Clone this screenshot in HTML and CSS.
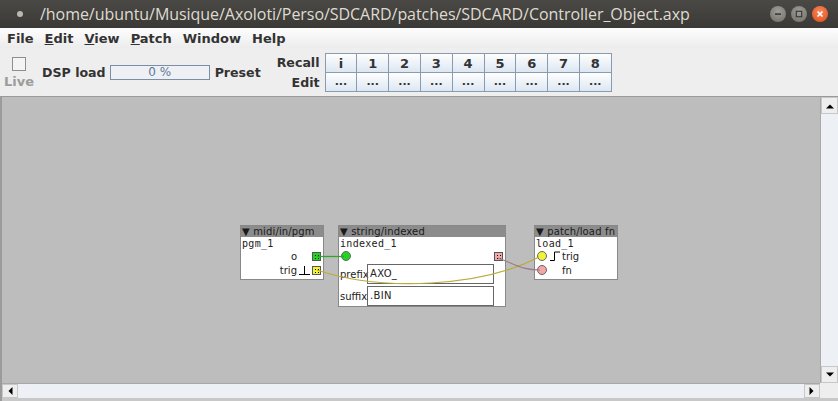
FILE: index.html
```
<!DOCTYPE html>
<html>
<head>
<meta charset="utf-8">
<link rel="stylesheet" href="styles.css">
</head>
<body>
<div class="window">
  <div class="titlebar">
    <span class="tb-dot"></span>
    <span class="tb-title">/home/ubuntu/Musique/Axoloti/Perso/SDCARD/patches/SDCARD/Controller_Object.axp</span>
    <span class="tb-buttons">
      <span class="wb wb-min"><svg width="14" height="14" viewBox="0 0 14 14"><rect x="4" y="6.3" width="6" height="1.6" fill="#3c3b37"/></svg></span>
      <span class="wb wb-max"><svg width="14" height="14" viewBox="0 0 14 14"><rect x="4.3" y="4.3" width="5.4" height="5.4" fill="none" stroke="#3c3b37" stroke-width="1.2"/></svg></span>
      <span class="wb wb-close"><svg width="14" height="14" viewBox="0 0 14 14"><path d="M4.5 4.5L9.5 9.5M9.5 4.5L4.5 9.5" stroke="#fff" stroke-width="1.6"/></svg></span>
    </span>
  </div>
  <div class="menubar">
    <span class="mi">File</span>
    <span class="mi"><u>E</u>dit</span>
    <span class="mi"><u>V</u>iew</span>
    <span class="mi"><u>P</u>atch</span>
    <span class="mi">Window</span>
    <span class="mi">Help</span>
  </div>
  <div class="toolbar">
    <div class="live">
      <span class="chk"></span>
      <span class="live-lbl">Live</span>
    </div>
    <span class="tlbl dsp">DSP load</span>
    <div class="progress">0 %</div>
    <span class="tlbl preset">Preset</span>
    <div class="preset-labels">
      <span class="tlbl">Recall</span>
      <span class="tlbl">Edit</span>
    </div>
    <div class="pgrid">
      <span class="pb">i</span><span class="pb">1</span><span class="pb">2</span><span class="pb">3</span><span class="pb">4</span><span class="pb">5</span><span class="pb">6</span><span class="pb">7</span><span class="pb">8</span>
      <span class="pb dots">...</span><span class="pb dots">...</span><span class="pb dots">...</span><span class="pb dots">...</span><span class="pb dots">...</span><span class="pb dots">...</span><span class="pb dots">...</span><span class="pb dots">...</span><span class="pb dots">...</span>
    </div>
  </div>
  <div class="workarea">
    <div class="row-main">
      <div class="canvas">
        <div class="node n1">
          <div class="nh">▼ midi/in/pgm</div>
          <div class="nname">pgm_1</div>
          <div class="port out"><span class="plbl">o</span><span class="slot"></span><span class="sq green"></span></div>
          <div class="port out"><span class="plbl">trig</span><span class="slot"><svg width="12" height="10" viewBox="0 0 12 10"><path d="M0 9.5H11M5.5 9.5V1" stroke="#000" stroke-width="1" fill="none"/></svg></span><span class="sq yellow"></span></div>
        </div>
        <div class="node n2">
          <div class="nh">▼ string/indexed</div>
          <div class="nname">indexed_1</div>
          <div class="n2ports"><span class="circ green"></span><span class="sq pink"></span></div>
          <div class="field"><span class="flbl">prefix</span><span class="fbox">AXO_</span></div>
          <div class="field"><span class="flbl">suffix</span><span class="fbox">.BIN</span></div>
        </div>
        <div class="node n3">
          <div class="nh">▼ patch/load fn</div>
          <div class="nname">load_1</div>
          <div class="port in"><span class="circ yellow"></span><span class="slot"><svg width="12" height="10" viewBox="0 0 12 10"><path d="M1 9.5H5.5V1H11" stroke="#000" stroke-width="1" fill="none"/></svg></span><span class="plbl">trig</span></div>
          <div class="port in"><span class="circ pink"></span><span class="slot"></span><span class="plbl">fn</span></div>
        </div>
        <svg class="wires" width="817" height="287" viewBox="0 0 817 287">
          <path d="M315 159.5 L342 159.5" stroke="#2ea62e" stroke-width="1.3" fill="none"/>
          <path d="M315 173 C 380 195, 480 190, 537 160" stroke="#b8ad3c" stroke-width="1.2" fill="none"/>
          <path d="M496 161 C 515 168, 520 173, 538 173" stroke="#a07a86" stroke-width="1.2" fill="none"/>
        </svg>
      </div>
      <div class="vscroll">
        <span class="sbtn"><svg width="10" height="6" viewBox="0 0 10 6"><path d="M1 5.5L5 1.5L9 5.5Z" fill="#000"/></svg></span>
        <span class="strack"></span>
        <span class="sbtn"><svg width="10" height="6" viewBox="0 0 10 6"><path d="M1 0.5L5 4.5L9 0.5Z" fill="#000"/></svg></span>
      </div>
    </div>
    <div class="row-h">
      <div class="hscroll">
        <span class="sbtn h"><svg width="6" height="10" viewBox="0 0 6 10"><path d="M5.5 1L1.5 5L5.5 9Z" fill="#000"/></svg></span>
        <span class="strack"></span>
        <span class="sbtn h"><svg width="6" height="10" viewBox="0 0 6 10"><path d="M0.5 1L4.5 5L0.5 9Z" fill="#000"/></svg></span>
      </div>
      <div class="corner"></div>
    </div>
  </div>
</div>
</body>
</html>
```
FILE: styles.css
```
html, body { margin: 0; padding: 0; }
body { width: 838px; height: 401px; overflow: hidden; background: #3c3b37; font-family: "DejaVu Sans", sans-serif; }
.window { width: 838px; height: 401px; display: flex; flex-direction: column; }

.titlebar { height: 28px; flex: none; display: flex; align-items: center; background: linear-gradient(#4a4945, #3a3935); color: #dfdbd2; }
.tb-dot { width: 6px; height: 6px; border-radius: 50%; background: #bbb8b0; margin-left: 17px; margin-right: 17px; }
.tb-title { font-family: "Open Sans", sans-serif; font-size: 16px; letter-spacing: -0.05px; white-space: nowrap; }
.tb-buttons { margin-left: auto; margin-right: 10px; display: flex; gap: 5px; }
.wb { width: 16px; height: 16px; border-radius: 50%; display: flex; align-items: center; justify-content: center; }
.wb svg { width: 14px; height: 14px; }
.wb-min, .wb-max { background: radial-gradient(circle at 50% 35%, #a09e98, #6f6d68); }
.wb-close { background: radial-gradient(circle at 50% 35%, #f7895c, #df4a16); }

.menubar { height: 20px; flex: none; display: flex; align-items: center; background: linear-gradient(#fdfdfd, #ececec); font-weight: bold; font-size: 13px; color: #333; padding-left: 7px; gap: 11px; }
.mi u { text-decoration: underline; }

.toolbar { height: 49px; flex: none; display: flex; align-items: center; background: #eeeeee; border-bottom: 1px solid #9a9a9a; padding-left: 12px; box-sizing: border-box; font-size: 12.6px; font-weight: bold; color: #333; }
.live { display: flex; flex-direction: column; align-items: center; width: 14px; margin-top: 2px; }
.chk { width: 12px; height: 12px; border: 1px solid #8e8f8f; background: #f4f4f4; }
.live-lbl { color: #9c9c9c; margin-top: 3px; font-size: 13px; }
.tlbl { white-space: nowrap; }
.dsp { margin-left: 16px; }
.progress { width: 98px; height: 13px; border: 1px solid #7b8ea6; background: #eef0f3; margin-left: 4px; color: #5f7a9f; font-weight: normal; font-size: 12px; text-align: center; line-height: 13px; }
.preset { margin-left: 5px; }
.preset-labels { display: flex; flex-direction: column; align-items: flex-end; margin-left: 16px; gap: 5px; margin-top: 1px; }
.pgrid { display: grid; grid-template-columns: repeat(9, 31.8px); grid-template-rows: 19px 19px; margin-left: 5px; }
.pb { border: 1px solid #8a9bb0; margin: 0 -1px -1px 0; background: linear-gradient(#fefefe, #dce7f2); display: flex; align-items: center; justify-content: center; font-size: 13px; color: #333; }
.pb.dots { font-size: 11px; padding-bottom: 2px; box-sizing: border-box; }

.workarea { flex: 1; display: flex; flex-direction: column; background: #e6e6e6; border-left: 2px solid #9b9b9b; }
.row-main { flex: 1; display: flex; }
.canvas { flex: 1; position: relative; background: #bdbdbd; }
.vscroll { width: 17px; display: flex; flex-direction: column; background: #eef1f5; border-left: 1px solid #a8a8a8; }
.sbtn { flex: none; height: 17px; display: flex; align-items: center; justify-content: center; background: #eeeeee; border: 1px solid #c7c7c7; box-sizing: border-box; }
.sbtn.h { width: 16px; height: auto; }
.strack { flex: 1; background: #edf1f6; }
.row-h { height: 15px; display: flex; border-bottom: 3px solid #c8c8c8; }
.hscroll { flex: 1; display: flex; background: #eef1f5; border-top: 1px solid #a8a8a8; }
.corner { width: 18px; background: #eeeeee; }

.node { position: absolute; background: #fff; border: 1px solid #888; font-family: "DejaVu Sans Mono", monospace; font-size: 10px; color: #222; }
.nh { height: 11px; background: #8c8c8c; color: #1a1a1a; font-family: "DejaVu Sans", sans-serif; font-size: 10px; letter-spacing: 0.15px; line-height: 11px; padding-left: 1px; white-space: nowrap; overflow: hidden; }
.nname { height: 12px; line-height: 13px; padding-left: 1px; letter-spacing: 0.3px; }
.n1 { left: 238px; top: 128px; width: 82px; height: 53px; }
.n2 { left: 336px; top: 128px; width: 166px; height: 80px; }
.n3 { left: 532px; top: 128px; width: 82px; height: 53px; }
.port { display: flex; align-items: center; height: 14px; font-family: "DejaVu Sans", sans-serif; font-size: 10px; }
.port.out { justify-content: flex-end; padding-right: 2px; }
.port.in { padding-left: 2px; }
.slot { width: 15px; height: 10px; flex: none; display: flex; justify-content: center; }
.sq { width: 7px; height: 7px; border: 1px solid #555; flex: none; background-image: radial-gradient(#000 0.7px, transparent 0.8px); background-size: 3px 3px; background-position: 1px 1px; }
.circ { width: 8px; height: 8px; border-radius: 50%; border: 1px solid #666; flex: none; }
.green { background-color: #22d422; }
.yellow { background-color: #f2f23a; }
.pink { background-color: #f3a8a8; }
.n2ports { display: flex; justify-content: space-between; align-items: center; height: 14px; padding: 0 2px 0 2px; }
.field { display: flex; align-items: center; height: 22px; font-family: "DejaVu Sans", sans-serif; font-size: 10px; }
.flbl { width: 27px; padding-left: 1px; }
.fbox { width: 123px; height: 18px; border: 1px solid #666; line-height: 18px; padding-left: 2px; font-size: 10px; letter-spacing: 0.3px; }
.wires { position: absolute; left: 0; top: 0; pointer-events: none; }
```
